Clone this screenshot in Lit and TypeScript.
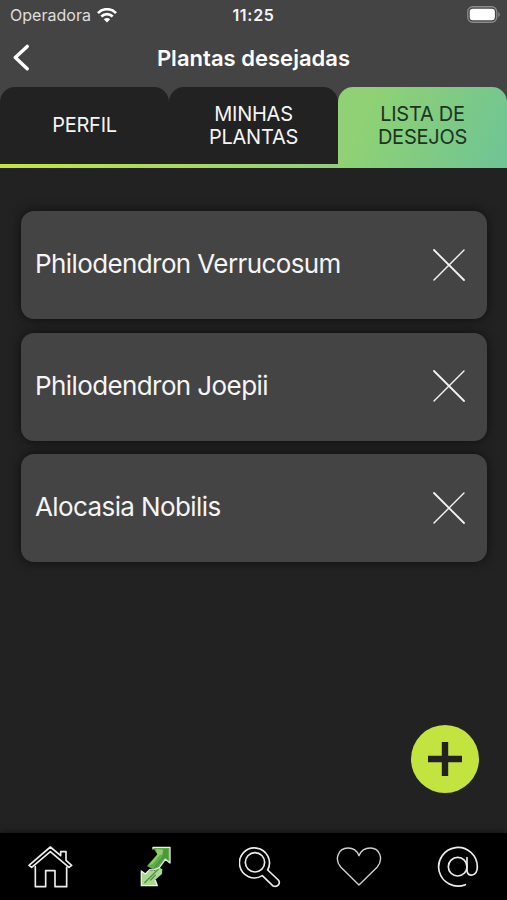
import { LitElement, html, css, svg } from "lit";
import { customElement, property } from "lit/decorators.js";

@customElement("wish-card")
class WishCard extends LitElement {
  @property() name = "";
  static styles = css`
    :host {
      display: flex;
      box-sizing: border-box;
      height: 108px;
      align-items: center;
      justify-content: space-between;
      padding: 0 21.5px 1px 14px;
      border-radius: 13px;
      background: #444;
      color: #f5f5f5;
      box-shadow: 0 0 12px rgba(0, 0, 0, 0.6);
    }
    .name {
      font-size: 26px;
      line-height: 32px;
      white-space: nowrap;
      letter-spacing: -0.6px;
      padding-bottom: 1px;
    }
    svg { display: block; }
  `;
  render() {
    return html`
      <span class="name">${this.name}</span>
      <svg width="32" height="32" viewBox="0 0 32 32" stroke="#f4f4f4" stroke-linecap="round">
        <path d="M1 1 31 31" stroke-width="1.8" />
        <path d="M31 1 1 31" stroke-width="1.4" />
      </svg>
    `;
  }
}

@customElement("app-root")
class AppRoot extends LitElement {
  static styles = css`
    :host {
      display: flex;
      flex-direction: column;
      box-sizing: border-box;
      width: 507px;
      height: 900px;
      overflow: hidden;
      background: #222;
      color: #f5f5f5;
      font-family: Inter, "Liberation Sans", sans-serif;
    }
    svg { display: block; }
    .top { height: 87px; background: #444; flex: none; }
    .status {
      display: grid;
      grid-template-columns: 1fr auto 1fr;
      height: 30px;
      align-items: center;
      padding: 0 7px 0 10px;
      font-size: 16px;
    }
    .carrier { display: flex; align-items: center; gap: 6px; color: #dedede; }
    .carrier-name { letter-spacing: 0.02px; }
    .time { font-weight: 600; letter-spacing: 0.7px; margin-right: 3px; }
    .battery { justify-self: end; margin-bottom: 2px; }
    .bar {
      display: grid;
      grid-template-columns: 30px 1fr 30px;
      height: 55px;
      align-items: center;
      padding: 0 12px;
    }
    .title { text-align: center; font-size: 22px; font-weight: 600; letter-spacing: 0.02px; color: #fff; }
    .tabs {
      display: grid;
      grid-template-columns: repeat(3, 1fr);
      height: 81px;
      flex: none;
      background: linear-gradient(#444, #444) top / 100% 30px no-repeat,
        linear-gradient(90deg, #c6e43d, #8ed07a 67%, #72c591);
    }
    .tab {
      display: flex;
      align-items: center;
      justify-content: center;
      box-sizing: border-box;
      height: 77px;
      padding-top: 1px;
      border-radius: 15px 15px 0 0;
      background: #222;
      text-align: center;
      font-size: 20px;
      line-height: 23.5px;
      letter-spacing: -0.25px;
    }
    .active {
      height: 81px;
      padding-bottom: 4px;
      color: #1c3420;
      background: linear-gradient(115deg, #8fd174 20%, #70c594 95%);
    }
    .list {
      display: flex;
      flex-direction: column;
      gap: 13.5px;
      padding: 43px 20.5px 0 21px;
    }
    .add {
      display: grid;
      place-items: center;
      width: 68px;
      height: 68px;
      margin: auto 28px 40.5px auto;
      border-radius: 50%;
      background: #c3e43e;
      flex: none;
    }
    .nav {
      display: grid;
      grid-template-columns: 111.5px 99.5px 97px 101px 42px;
      height: 67px;
      box-sizing: border-box;
      padding: 13px 0 0 28px;
      align-items: start;
      flex: none;
      background: #000;
      box-shadow: 0 0 6px rgba(0, 0, 0, 0.6);
    }
  `;

  // Navigation artwork is drawn on a grid three times finer than its display size.
  private icon(x: number, w: number, art: unknown) {
    return html`<svg width=${w / 3} height="42" viewBox="${x} 78 ${w} 126" fill="none"
      stroke="#ededed" stroke-width="5" stroke-linejoin="round" stroke-linecap="round">${art}</svg>`;
  }

  render() {
    return html`
      <header class="top">
        <div class="status">
          <div class="carrier">
            <span class="carrier-name">Operadora</span>
            <svg width="20" height="15" viewBox="0 0 20 15" fill="none" stroke="#fff" stroke-width="2.7">
              <path d="M1 5.1C6-.1 14-.1 19 5.1M4.3 8.5c3.3-3.2 8.1-3.2 11.4 0" />
              <path d="M6.8 11.2c1.8-1.7 4.6-1.7 6.4 0L10 14.5z" fill="#fff" stroke="none" />
            </svg>
          </div>
          <span class="time">11:25</span>
          <svg class="battery" width="33" height="17" viewBox="0 0 33 17">
            <rect x=".75" y=".75" width="29" height="15.5" rx="5" fill="none" stroke="#8b8b8b" stroke-width="1.3" />
            <rect x="2.7" y="2.7" width="25.2" height="11.6" rx="3.2" fill="#fff" />
            <path d="M31.3 6v5q1.5-.8 1.5-2.5T31.3 6z" fill="#8b8b8b" />
          </svg>
        </div>
        <div class="bar">
          <svg width="18" height="27" viewBox="0 0 18 27" fill="none" stroke="#fff"
            stroke-width="3.4" stroke-linecap="round" stroke-linejoin="round">
            <path d="M15.2 2.4 3.3 13.6 15.2 24.8" />
          </svg>
          <div class="title">Plantas desejadas</div>
        </div>
      </header>
      <div class="tabs">
        <div class="tab">PERFIL</div>
        <div class="tab">MINHAS<br />PLANTAS</div>
        <div class="tab active">LISTA DE<br />DESEJOS</div>
      </div>
      <main class="list">
        <wish-card name="Philodendron Verrucosum"></wish-card>
        <wish-card name="Philodendron Joepii"></wish-card>
        <wish-card name="Alocasia Nobilis"></wish-card>
      </main>
      <div class="add">
        <svg width="34" height="34" viewBox="0 0 34 34" stroke="#222" stroke-width="6.4">
          <path d="M17 0v34M0 17h34" />
        </svg>
      </div>
      <nav class="nav">
        ${this.icon(83, 135, svg`
          <path d="M105 140V200H136V152H164V200H199V142" />
          <path d="M86 136 150 81 181 107V95H197V121L214 136 206 142 150 95 94 142Z" />`)}
        ${this.icon(418, 95, svg`
          <path d="M457 83H507V128L493 118 472 146 460 150 439 138 470 103Z" fill="#5fae45" stroke="none" />
          <path d="M466 88 500 90 494 108 478 104 456 132 444 136 470 104Z" fill="#8fcb68" stroke="none" />
          <path d="M488 88 502 86 503 120 493 112 468 142 460 142 484 110Z" fill="#4b993b" stroke="none" />
          <path d="M423 153 434 161 446 152 462 152 474 142 485 148 484 162 463 180 470 196H423Z" fill="#a9d892" stroke="none" />
          <path d="M432 188 474 146M450 180 464 166" stroke="#4f9440" stroke-width="4" />
          <path d="M457 87V82H508V129L494 118 476 143 459 150 447 149 434 162 422 153V197H470L464 181" stroke-width="4" />`)}
        ${this.icon(118, 125, svg`
          <circle cx="166" cy="127" r="29" />
          <path d="M188 167A45 45 0 1 1 204 150L236 180Q242 188 236 195T219 197Z" />`)}
        ${this.icon(406, 137, svg`
          <path d="M475 195 420 141C400 118 413 84 442 84Q466 84 475 107Q484 84 509 84C538 84 549 118 530 141Z" stroke="#cfcfcf" stroke-width="4.2" />`)}
        ${this.icon(110, 125, svg`
          <circle cx="172" cy="140" r="28" />
          <path d="M200 113V151C200 173 231 170 231 141A58 58 0 1 0 195 194" />`)}
      </nav>
    `;
  }
}
